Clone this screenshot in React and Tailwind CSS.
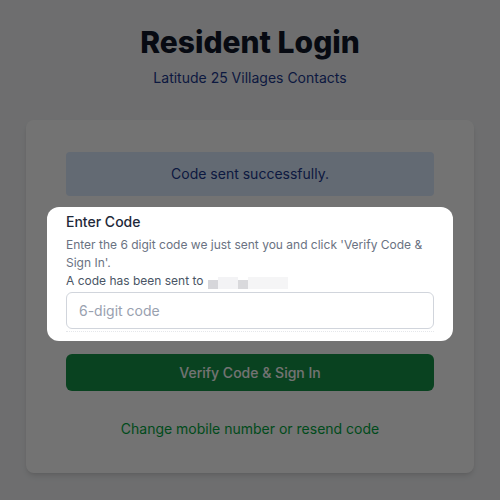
import React, { useState } from 'react';

export default function App() {
  const [code, setCode] = useState('');

  return (
    <div className="min-h-screen bg-gray-100 font-['Inter',sans-serif] px-[26px] pt-6">
      <header className="text-center">
        <h1 className="text-3xl font-extrabold text-gray-900">Resident Login</h1>
        <p className="mt-2 text-sm text-blue-900">Latitude 25 Villages Contacts</p>
      </header>

      <div className="mt-8 max-w-md mx-auto bg-white rounded-lg shadow-md px-10 pt-8 pb-[33px]">
        <div className="bg-blue-100 text-blue-900 text-sm text-center py-3 rounded">
          Code sent successfully.
        </div>

        {/* spotlight step of the tour */}
        <div className="relative z-10 mt-[11px] -mx-[19px] px-[19px] pt-[5px] pb-[9px] -mb-[12px] bg-white rounded-xl shadow-[0_0_0_9999px_rgba(0,0,0,0.55)]">
          <label className="block text-sm font-medium text-gray-800 leading-5">Enter Code</label>
          <p className="mt-1 text-xs leading-[18px] text-gray-500">
            Enter the 6 digit code we just sent you and click 'Verify Code &amp; Sign In'.
          </p>
          <p className="text-xs leading-[18px] text-gray-600 flex items-center">
            A code has been sent to
            <span className="ml-[4px] inline-flex items-end h-[16px]">
              <span className="w-[10px] h-[9px] bg-[#d6d6da]"></span>
              <span className="w-[20px] h-[12px] bg-[#f3f3f5]"></span>
              <span className="w-[10px] h-[9px] bg-[#d9d9dc]"></span>
              <span className="w-[40px] h-[12px] bg-[#f5f5f6]"></span>
            </span>
          </p>
          <input
            value={code}
            onChange={(e) => setCode(e.target.value)}
            type="text"
            placeholder="6-digit code"
            className="mt-[2px] w-full h-[37px] px-3 border border-gray-300 rounded-md text-sm text-gray-900 placeholder:text-gray-400 outline-none"
          />
          <div className="mt-[2px] border-b border-dotted border-gray-200"></div>
        </div>

        <button
          type="submit"
          className="mt-[25px] w-full h-[37px] bg-[#169347] text-white text-sm font-medium rounded-md"
        >
          Verify Code &amp; Sign In
        </button>

        <div className="mt-[25px] text-center">
          <a href="#" className="text-sm text-green-600">Change mobile number or resend code</a>
        </div>
      </div>
    </div>
  );
}
